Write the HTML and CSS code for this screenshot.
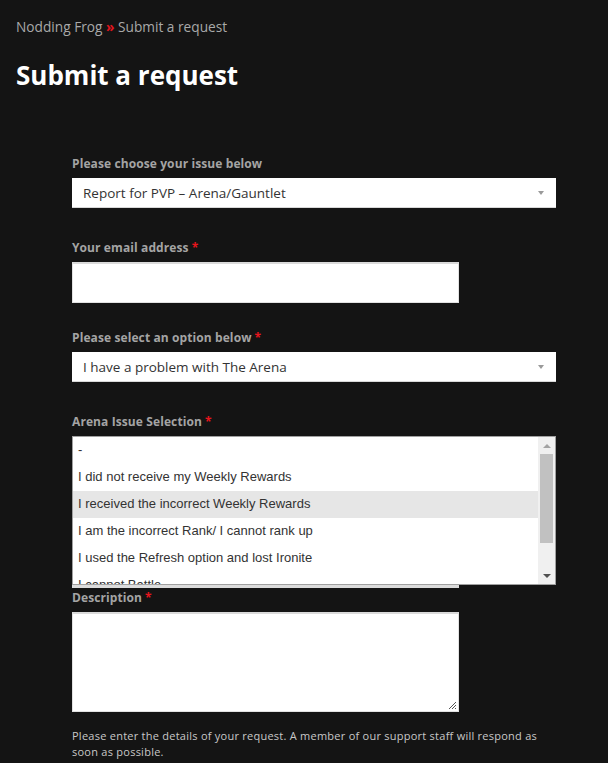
FILE: index.html
```html
<!DOCTYPE html>
<html lang="en">
<head>
<meta charset="utf-8">
<title>Submit a request</title>
<link rel="stylesheet" href="styles.css">
</head>
<body>
<div class="page">
  <nav class="crumbs"><a class="crumb">Nodding Frog</a> <span class="sep">»</span> <span class="crumb">Submit a request</span></nav>
  <h1 class="title">Submit a request</h1>

  <form class="form">
    <div class="field field-select">
      <label class="label">Please choose your issue below</label>
      <div class="select"><span class="select-text">Report for PVP – Arena/Gauntlet</span><span class="caret"></span></div>
    </div>

    <div class="field field-input">
      <label class="label">Your email address<span class="req">*</span></label>
      <div class="input"></div>
    </div>

    <div class="field field-select">
      <label class="label">Please select an option below<span class="req">*</span></label>
      <div class="select"><span class="select-text">I have a problem with The Arena</span><span class="caret"></span></div>
    </div>

    <div class="field field-arena">
      <label class="label">Arena Issue Selection<span class="req">*</span></label>
      <div class="arena-wrap">
        <div class="arena-base"></div>
        <div class="listbox">
          <ul class="options">
            <li class="option">-</li>
            <li class="option">I did not receive my Weekly Rewards</li>
            <li class="option option-hover">I received the incorrect Weekly Rewards</li>
            <li class="option">I am the incorrect Rank/ I cannot rank up</li>
            <li class="option">I used the Refresh option and lost Ironite</li>
            <li class="option">I cannot Battle</li>
          </ul>
          <div class="scrollbar">
            <div class="sb-btn"><span class="sb-up"></span></div>
            <div class="sb-track"><div class="sb-thumb"></div></div>
            <div class="sb-btn"><span class="sb-down"></span></div>
          </div>
        </div>
      </div>
    </div>

    <div class="field field-desc">
      <label class="label">Description<span class="req">*</span></label>
      <div class="textarea">
        <svg class="grip" width="9" height="9" viewBox="0 0 9 9"><path d="M1 8L8 1M4 8L8 4M7 8L8 7" stroke="#555" stroke-width="1" fill="none"/></svg>
      </div>
    </div>

    <p class="help">Please enter the details of your request. A member of our support staff will respond as soon as possible.</p>
  </form>
</div>
</body>
</html>
```

FILE: styles.css
```css
html, body {
  margin: 0;
  padding: 0;
  background: #141414;
}
body {
  font-family: "Open Sans", "DejaVu Sans", sans-serif;
  color: #aaa;
}
.page {
  padding: 17px 16px 0 16px;
}
.crumbs {
  font-size: 13.7px;
  line-height: 20px;
  color: #a9a9a9;
}
.crumb {
  color: #a9a9a9;
}
.sep {
  color: #e0141e;
  font-weight: 700;
}
.title {
  margin: 22px 0 0 0;
  font-size: 26px;
  line-height: 32px;
  font-weight: 700;
  color: #ffffff;
}
.form {
  margin: 63px 0 0 56px;
  width: 484px;
}
.field {
  display: flex;
  flex-direction: column;
}
.field-select { margin-bottom: 30px; }
.field-input { margin-bottom: 25px; }
.field-arena { margin-bottom: 0; }
.field-desc { margin-bottom: 16px; }
.label {
  display: block;
  height: 18px;
  font-size: 12px;
  line-height: 20px;
  font-weight: 700;
  color: #a4a4a4;
  margin-bottom: 6px;
  letter-spacing: 0.1px;
}
.req {
  color: #e8141c;
  margin-left: 3px;
  font-size: 12px;
  line-height: 12px;
}
.select {
  box-sizing: border-box;
  height: 30px;
  width: 484px;
  background: #fff;
  border-bottom: 1px solid #d8d8d8;
  display: flex;
  align-items: center;
  justify-content: space-between;
  padding: 0 12px 0 11px;
}
.select-text {
  font-size: 13.5px;
  color: #333;
}
.caret {
  width: 0;
  height: 0;
  border-left: 3px solid transparent;
  border-right: 3px solid transparent;
  border-top: 4px solid #9a9a9a;
}
.input {
  box-sizing: border-box;
  width: 387px;
  height: 41px;
  background: #fff;
  border: 1px solid #e2e2e2;
  border-top: 2px solid #dadada;
}
.arena-wrap {
  position: relative;
  height: 152px;
}
.arena-base {
  box-sizing: border-box;
  width: 387px;
  height: 152px;
  background: #fff;
  border-bottom: 3px solid #dcdcdc;
}
.listbox {
  position: absolute;
  top: 0;
  left: 0;
  box-sizing: border-box;
  width: 484px;
  height: 149px;
  border: 1px solid #a0a0a0;
  background: #fff;
  display: flex;
  overflow: hidden;
}
.options {
  list-style: none;
  margin: 0;
  padding: 0;
  flex: 1;
  overflow: hidden;
}
.option {
  box-sizing: border-box;
  height: 27px;
  line-height: 25px;
  padding-left: 5px;
  font-family: "Liberation Sans", Arial, sans-serif;
  font-size: 13px;
  color: #333;
  white-space: nowrap;
}
.option-hover {
  background: #e6e6e6;
}
.scrollbar {
  width: 17px;
  background: #f0f0f0;
  display: flex;
  flex-direction: column;
}
.sb-btn {
  height: 17px;
  display: flex;
  align-items: center;
  justify-content: center;
}
.sb-up {
  width: 0;
  height: 0;
  border-left: 4px solid transparent;
  border-right: 4px solid transparent;
  border-bottom: 4px solid #a3a3a3;
}
.sb-down {
  width: 0;
  height: 0;
  border-left: 4px solid transparent;
  border-right: 4px solid transparent;
  border-top: 4px solid #505050;
}
.sb-track {
  flex: 1;
  padding: 0 2px;
}
.sb-thumb {
  height: 89px;
  background: #c1c1c1;
}
.textarea {
  position: relative;
  box-sizing: border-box;
  width: 387px;
  height: 100px;
  background: #fff;
  border: 1px solid #e2e2e2;
  border-top: 2px solid #dadada;
}
.grip {
  position: absolute;
  right: 1px;
  bottom: 1px;
}
.help {
  margin: 0;
  font-size: 11px;
  line-height: 16px;
  letter-spacing: 0.25px;
  color: #c8c8c8;
}
```
